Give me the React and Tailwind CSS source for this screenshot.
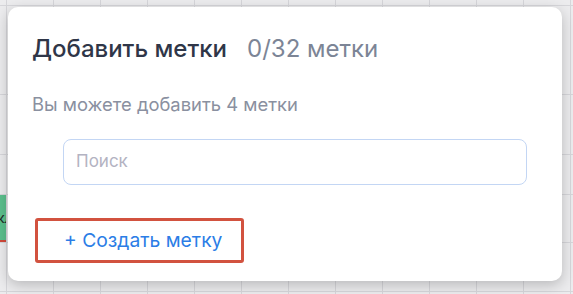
import React from 'react';

const rows = [6, 89, 60, 40, 48, 49, 20];
const cols = Array.from({ length: 12 });

const Sheet = () => (
  <div className="flex flex-col w-[573px] h-[294px] overflow-hidden bg-[#ececee]">
    {rows.map((h, ri) => (
      <div key={ri} className="flex shrink-0 border-b border-[#d6d6da]" style={{ height: h }}>
        <div className={`w-[7px] shrink-0 border-r border-[#d6d6da] overflow-hidden ${ri === 4 ? 'bg-[#5bbf8c]' : ''}`}>
          {ri === 4 && (
            <div className="h-full flex items-center -ml-[3px] text-[14px] text-[#1f2a2a] border-b-2 border-[#d24a3a]">кл</div>
          )}
        </div>
        {cols.map((_, ci) => (
          <div key={ci} className="w-[47px] shrink-0 border-r border-[#d6d6da]" />
        ))}
      </div>
    ))}
  </div>
);

export default function App() {
  return (
    <div className="relative w-[573px] h-[294px] overflow-hidden" style={{ fontFamily: 'Inter, "Noto Sans", sans-serif' }}>
      <Sheet />

      {/* Modal */}
      <div className="absolute left-[8px] top-[7px] w-[554px] h-[274px] bg-white rounded-[10px] shadow-[0_4px_14px_rgba(0,0,0,0.22)] px-6 pt-[28px]">
        <div className="flex items-baseline gap-5 text-[24px] leading-[28px]">
          <span className="font-medium text-[#2f3648]">Добавить метки</span>
          <span className="text-[#7c8596]">0/32 метки</span>
        </div>

        <p className="mt-[30px] text-[18.4px] leading-[22px] text-[#8a90a0]">Вы можете добавить 4 метки</p>

        <div className="ml-[31px] mt-[24px] w-[464px] h-[46px] rounded-[8px] border border-[#c3d6f4] flex items-center px-3">
          <input
            className="w-full outline-none text-[17px] text-[#2f3648] placeholder:text-[#b3b3c2] bg-transparent"
            placeholder="Поиск"
          />
        </div>

        <div className="ml-[3px] mt-[33px] w-[209px] h-[45px] border-[3px] border-[#d2523f] rounded-[3px] flex items-center pl-[26px]">
          <span className="text-[19.3px] text-[#2b7de6]">+ Создать метку</span>
        </div>
      </div>
    </div>
  );
}
